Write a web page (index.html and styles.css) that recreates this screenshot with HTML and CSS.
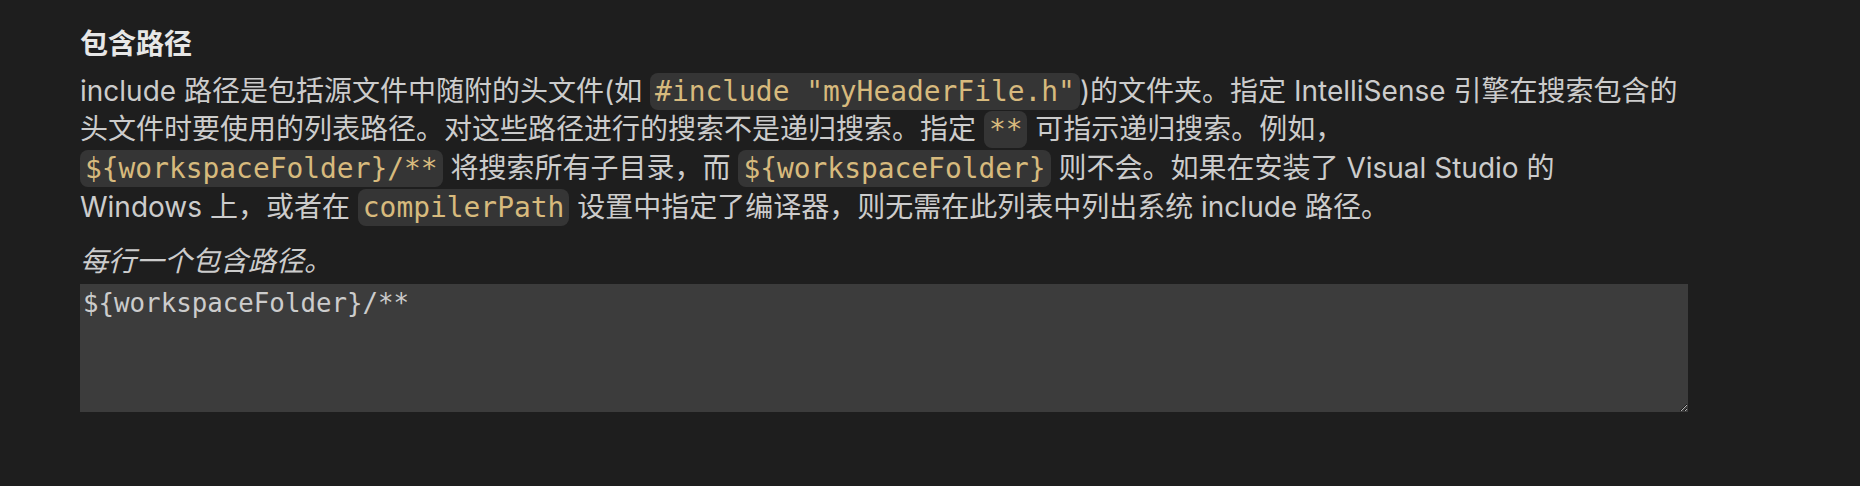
FILE: index.html
```html
<!DOCTYPE html>
<html lang="zh-CN">
<head>
<meta charset="utf-8">
<title>包含路径</title>
<link rel="stylesheet" href="styles.css">
</head>
<body>
<div class="setting">
  <div class="setting-title">包含路径</div>
  <div class="setting-desc">include 路径是包括源文件中随附的头文件(如 <code>#include "myHeaderFile.h"</code>)的文件夹。指定 IntelliSense 引擎在搜索包含的<br>头文件时要使用的列表路径。对这些路径进行的搜索不是递归搜索。指定 <code>**</code> 可指示递归搜索。例如，<br><code>${workspaceFolder}/**</code> 将搜索所有子目录，而 <code>${workspaceFolder}</code> 则不会。如果在安装了 Visual Studio 的<br>Windows 上，或者在 <code>compilerPath</code> 设置中指定了编译器，则无需在此列表中列出系统 include 路径。</div>
  <div class="setting-hint">每行一个包含路径。</div>
  <textarea class="setting-input" spellcheck="false">${workspaceFolder}/**</textarea>
</div>
</body>
</html>
```

FILE: styles.css
```css
html, body {
  margin: 0;
  padding: 0;
  background: #1e1e1e;
}

body {
  font-family: "Inter", "Noto Sans CJK SC", sans-serif;
  color: #cccccc;
}

.setting {
  display: flex;
  flex-direction: column;
  padding: 25px 0 0 80px;
  width: 1608px;
}

.setting-title {
  font-size: 28px;
  line-height: 38.7px;
  font-weight: 600;
  color: #e7e7e7;
}

.setting-desc {
  margin-top: 8px;
  font-size: 28px;
  line-height: 38.7px;
  white-space: nowrap;
  color: #cccccc;
}

.setting-desc code {
  font-family: "DejaVu Sans Mono", monospace;
  font-size: 27.9px;
  line-height: 32px;
  padding: 2px 5px;
  border-radius: 8px;
  background: #353535;
  color: #d7ba7d;
}

.setting-hint {
  margin-top: 15px;
  font-size: 28px;
  line-height: 38.7px;
  font-style: italic;
  color: #cccccc;
}

.setting-input {
  display: block;
  box-sizing: border-box;
  margin: 4px 0 0 0;
  width: 1608px;
  height: 128px;
  padding: 4px 3px;
  border: none;
  outline: none;
  background: #3c3c3c;
  color: #cccccc;
  font-family: "DejaVu Sans Mono", monospace;
  font-size: 25.8px;
  color-scheme: dark;
  resize: vertical;
}
```
